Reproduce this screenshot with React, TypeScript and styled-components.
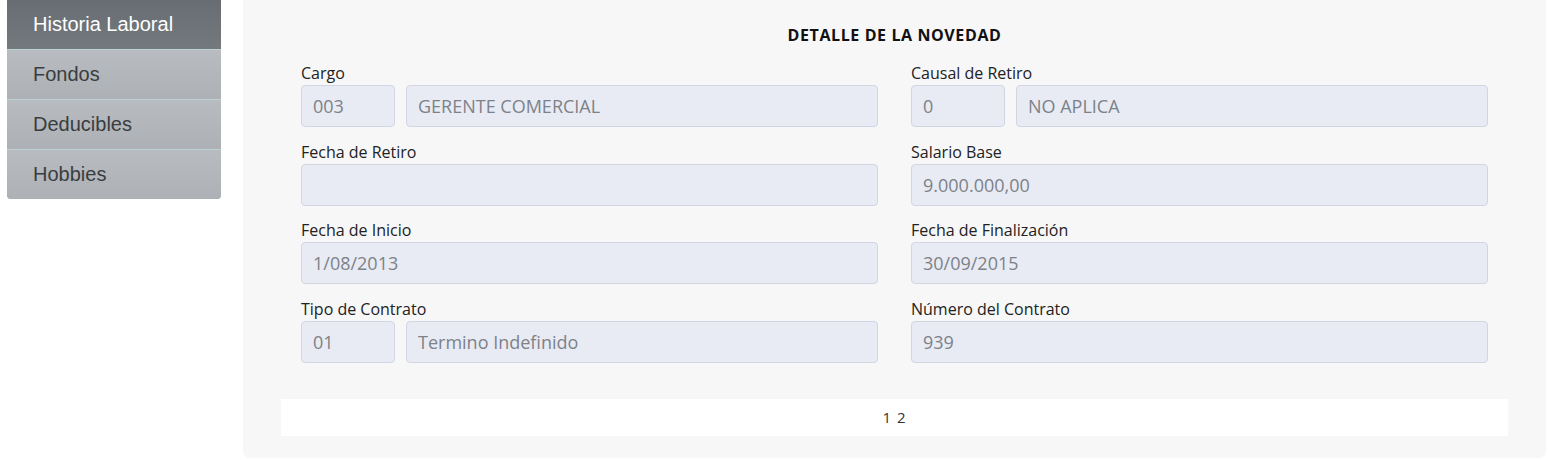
import React from "react";
import styled, { createGlobalStyle } from "styled-components";

const Global = createGlobalStyle`
  html, body { margin: 0; padding: 0; background: #ffffff; }
  body { font-family: "Open Sans", "Noto Sans", sans-serif; }
`;

const Page = styled.div`
  display: flex;
  align-items: flex-start;
  gap: 22px;
  padding: 0 2px 0 7px;
  width: 1548px;
  box-sizing: border-box;
`;

const Sidebar = styled.nav`
  width: 214px;
  flex: none;
  display: flex;
  flex-direction: column;
  border-radius: 0 0 4px 4px;
  overflow: hidden;
  background: #b0b4b8;
`;

const NavItem = styled.div<{ $active?: boolean }>`
  box-sizing: border-box;
  height: ${(p) => (p.$active ? "49px" : "50px")};
  display: flex;
  align-items: center;
  padding-left: 26px;
  font-family: "Liberation Sans", Arial, sans-serif;
  font-size: 20px;
  color: ${(p) => (p.$active ? "#ffffff" : "#3a3d40")};
  background: ${(p) =>
    p.$active
      ? "linear-gradient(#676d72, #74797e)"
      : "linear-gradient(#b8bbbf, #adb1b5)"};
  border-top: ${(p) => (p.$active ? "none" : "1px solid #bcd3d6")};
`;

const Panel = styled.section`
  flex: 1;
  background: #f7f7f7;
  border-radius: 0 0 7px 7px;
  padding: 23px 38px 22px;
  display: flex;
  flex-direction: column;
`;

const Title = styled.h2`
  margin: 0;
  text-align: center;
  font-size: 16px;
  font-weight: 700;
  letter-spacing: 0.6px;
  color: #111;
  line-height: 24px;
`;

const Form = styled.div`
  display: grid;
  grid-template-columns: 1fr 1fr;
  column-gap: 33px;
  row-gap: 12.5px;
  padding: 14px 20px 0;
`;

const Field = styled.div`
  display: flex;
  flex-direction: column;
`;

const Label = styled.label`
  font-size: 16px;
  color: #222;
  line-height: 24px;
`;

const InputRow = styled.div`
  display: flex;
  gap: 11px;
`;

const Input = styled.div<{ $code?: boolean }>`
  box-sizing: border-box;
  height: 42px;
  ${(p) => (p.$code ? "width: 94px; flex: none;" : "flex: 1;")}
  background: #e8ebf4;
  border: 1px solid #d2d5e4;
  border-radius: 4px;
  padding: 0 11px;
  display: flex;
  align-items: center;
  font-size: 18px;
  color: #7d8288;
`;

const Pager = styled.div`
  margin-top: 36px;
  height: 37px;
  background: #ffffff;
  display: flex;
  align-items: center;
  justify-content: center;
  font-size: 15px;
  color: #333;
  letter-spacing: 1px;
`;

type F = { label: string; code?: string; value: string };

const fields: F[] = [
  { label: "Cargo", code: "003", value: "GERENTE COMERCIAL" },
  { label: "Causal de Retiro", code: "0", value: "NO APLICA" },
  { label: "Fecha de Retiro", value: "" },
  { label: "Salario Base", value: "9.000.000,00" },
  { label: "Fecha de Inicio", value: "1/08/2013" },
  { label: "Fecha de Finalización", value: "30/09/2015" },
  { label: "Tipo de Contrato", code: "01", value: "Termino Indefinido" },
  { label: "Número del Contrato", value: "939" },
];

export default function App() {
  return (
    <>
      <Global />
      <Page>
        <Sidebar>
          <NavItem $active>Historia Laboral</NavItem>
          <NavItem>Fondos</NavItem>
          <NavItem>Deducibles</NavItem>
          <NavItem>Hobbies</NavItem>
        </Sidebar>
        <Panel>
          <Title>DETALLE DE LA NOVEDAD</Title>
          <Form>
            {fields.map((f) => (
              <Field key={f.label}>
                <Label>{f.label}</Label>
                <InputRow>
                  {f.code !== undefined && <Input $code>{f.code}</Input>}
                  <Input>{f.value}</Input>
                </InputRow>
              </Field>
            ))}
          </Form>
          <Pager>1 2</Pager>
        </Panel>
      </Page>
    </>
  );
}
